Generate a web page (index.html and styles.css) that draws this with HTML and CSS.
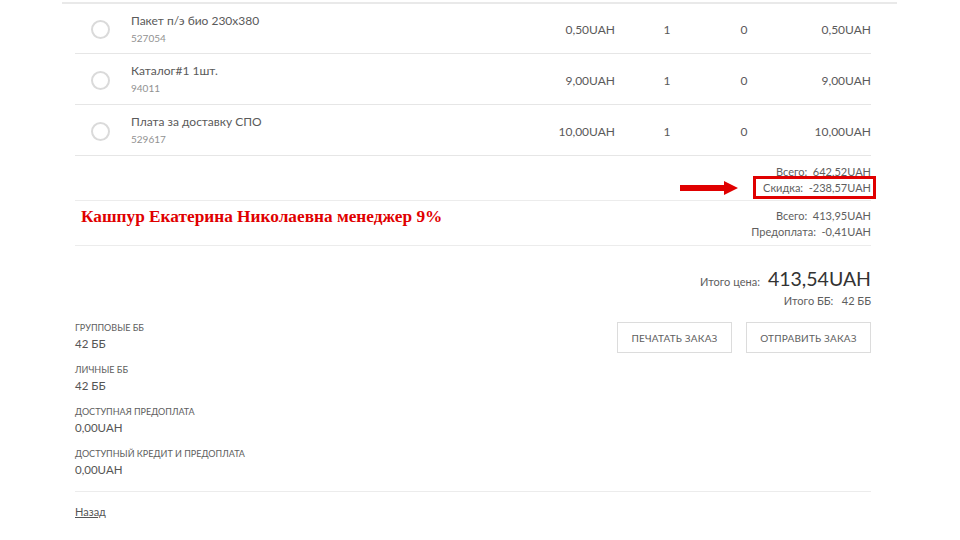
FILE: index.html
```html
<!DOCTYPE html>
<html lang="ru">
<head>
<meta charset="utf-8">
<title>Заказ</title>
<link rel="stylesheet" href="styles.css">
</head>
<body>
<div class="wrap">
  <div class="content">
    <div class="row">
      <div class="radio"><span class="circle"></span></div>
      <div class="name"><div class="title">Пакет п/э био 230x380</div><div class="code">527054</div></div>
      <div class="price">0,50UAH</div>
      <div class="qty">1</div>
      <div class="disc">0</div>
      <div class="total">0,50UAH</div>
    </div>
    <div class="row">
      <div class="radio"><span class="circle"></span></div>
      <div class="name"><div class="title">Каталог#1 1шт.</div><div class="code">94011</div></div>
      <div class="price">9,00UAH</div>
      <div class="qty">1</div>
      <div class="disc">0</div>
      <div class="total">9,00UAH</div>
    </div>
    <div class="row">
      <div class="radio"><span class="circle"></span></div>
      <div class="name"><div class="title">Плата за доставку СПО</div><div class="code">529617</div></div>
      <div class="price">10,00UAH</div>
      <div class="qty">1</div>
      <div class="disc">0</div>
      <div class="total">10,00UAH</div>
    </div>

    <div class="sum1">
      <div class="line">Всего:&nbsp;&nbsp;642,52UAH</div>
      <div class="line discount">Скидка:&nbsp;&nbsp;-238,57UAH
        <span class="mark"></span>
        <svg class="arrow" width="58" height="14" viewBox="0 0 58 14"><path d="M0 4h44V0l14 7-14 7v-4H0z" fill="#e00000"/></svg>
      </div>
    </div>

    <div class="sum2">
      <div class="manager">Кашпур Екатерина Николаевна менеджер 9%</div>
      <div class="sum2-right">
        <div class="line">Всего:&nbsp;&nbsp;413,95UAH</div>
        <div class="line">Предоплата:&nbsp;&nbsp;-0,41UAH</div>
      </div>
    </div>

    <div class="grand">
      <div class="grand-line"><span class="grand-label">Итого цена:</span><span class="grand-value">413,54UAH</span></div>
      <div class="line">Итого ББ:&nbsp;&nbsp;&nbsp;42 ББ</div>
    </div>

    <div class="bottom">
      <div class="info">
        <div class="item"><div class="label">Групповые ББ</div><div class="value">42 ББ</div></div>
        <div class="item"><div class="label">Личные ББ</div><div class="value">42 ББ</div></div>
        <div class="item"><div class="label">Доступная предоплата</div><div class="value">0,00UAH</div></div>
        <div class="item"><div class="label">Доступный кредит и предоплата</div><div class="value">0,00UAH</div></div>
      </div>
      <div class="buttons">
        <button class="btn print">Печатать заказ</button>
        <button class="btn send">Отправить заказ</button>
      </div>
    </div>

    <div class="back"><a href="#">Назад</a></div>
  </div>
</div>
</body>
</html>
```

FILE: styles.css
```css
* { box-sizing: border-box; }
html, body { margin: 0; padding: 0; background: #fff; }
body {
  font-family: Lato, "Liberation Sans", sans-serif;
  color: #5a5a5a;
  font-size: 12px;
}
.wrap {
  width: 835px;
  margin-left: 62px;
  margin-top: 2px;
  border-top: 2px solid #e9e9e9;
  padding: 0 26px 0 13px;
}
.content { width: 796px; }
.row {
  display: grid;
  grid-template-columns: 56px 1fr 100px 104px 50px 102px;
  align-items: center;
  height: 51px;
  border-bottom: 1px solid #e6e6e6;
}
.row:first-child { height: 50px; }
.radio { display: flex; justify-content: flex-start; padding-left: 16px; padding-top: 2px; }
.circle {
  width: 19px; height: 19px;
  border: 2px solid #dadada;
  border-radius: 50%;
  display: block;
}
.name { padding-top: 1px; }
.title { font-size: 12px; color: #5a5a5a; line-height: 16px; }
.code { font-size: 10px; color: #929292; line-height: 16px; margin-top: 1px; }
.price, .total { text-align: right; font-size: 12px; }
.qty, .disc { text-align: center; font-size: 12px; }
.price, .qty, .disc, .total { padding-top: 2px; }

.line { font-size: 11px; line-height: 16px; color: #5e5e5e; text-align: right; }

.sum1 {
  height: 45px;
  border-bottom: 1px solid #ececec;
  padding-top: 8px;
}
.discount { position: relative; }
.mark {
  position: absolute;
  right: -5px; top: -4px;
  width: 123px; height: 23px;
  border: 3px solid #e00000;
}
.arrow { position: absolute; left: 605px; top: 1px; }

.sum2 {
  height: 45px;
  border-bottom: 1px solid #ececec;
  display: flex;
  justify-content: space-between;
  padding-top: 7px;
}
.manager {
  font-family: "Liberation Serif", "DejaVu Serif", serif;
  font-weight: bold;
  color: #e00000;
  font-size: 17.3px;
  padding-left: 6px;
  line-height: 18px;
}

.grand { padding-top: 20px; }
.grand-line { display: flex; justify-content: flex-end; align-items: baseline; gap: 8px; }
.grand-label { font-size: 11px; color: #5e5e5e; }
.grand-value { font-size: 19.5px; color: #333; line-height: 26px; }
.grand .line { margin-top: 1px; }

.bottom {
  display: flex;
  justify-content: space-between;
  align-items: flex-start;
  margin-top: 12px;
  padding-bottom: 12px;
  border-bottom: 1px solid #ececec;
}
.info { display: flex; flex-direction: column; gap: 10px; }
.label { font-size: 9px; text-transform: uppercase; color: #5e5e5e; line-height: 14px; }
.value { font-size: 11.5px; color: #555; line-height: 18px; }
.buttons { display: flex; gap: 14px; margin-top: 1px; }
.btn {
  font-family: inherit;
  background: #fff;
  border: 1px solid #dcdcdc;
  color: #5e5e5e;
  text-transform: uppercase;
  font-size: 10px;
  height: 31px;
  padding: 0;
  letter-spacing: 0.2px;
}
.print { width: 115px; }
.send { width: 125px; }
.back { padding-top: 13px; font-size: 11px; }
.back a { color: #555; }
```
